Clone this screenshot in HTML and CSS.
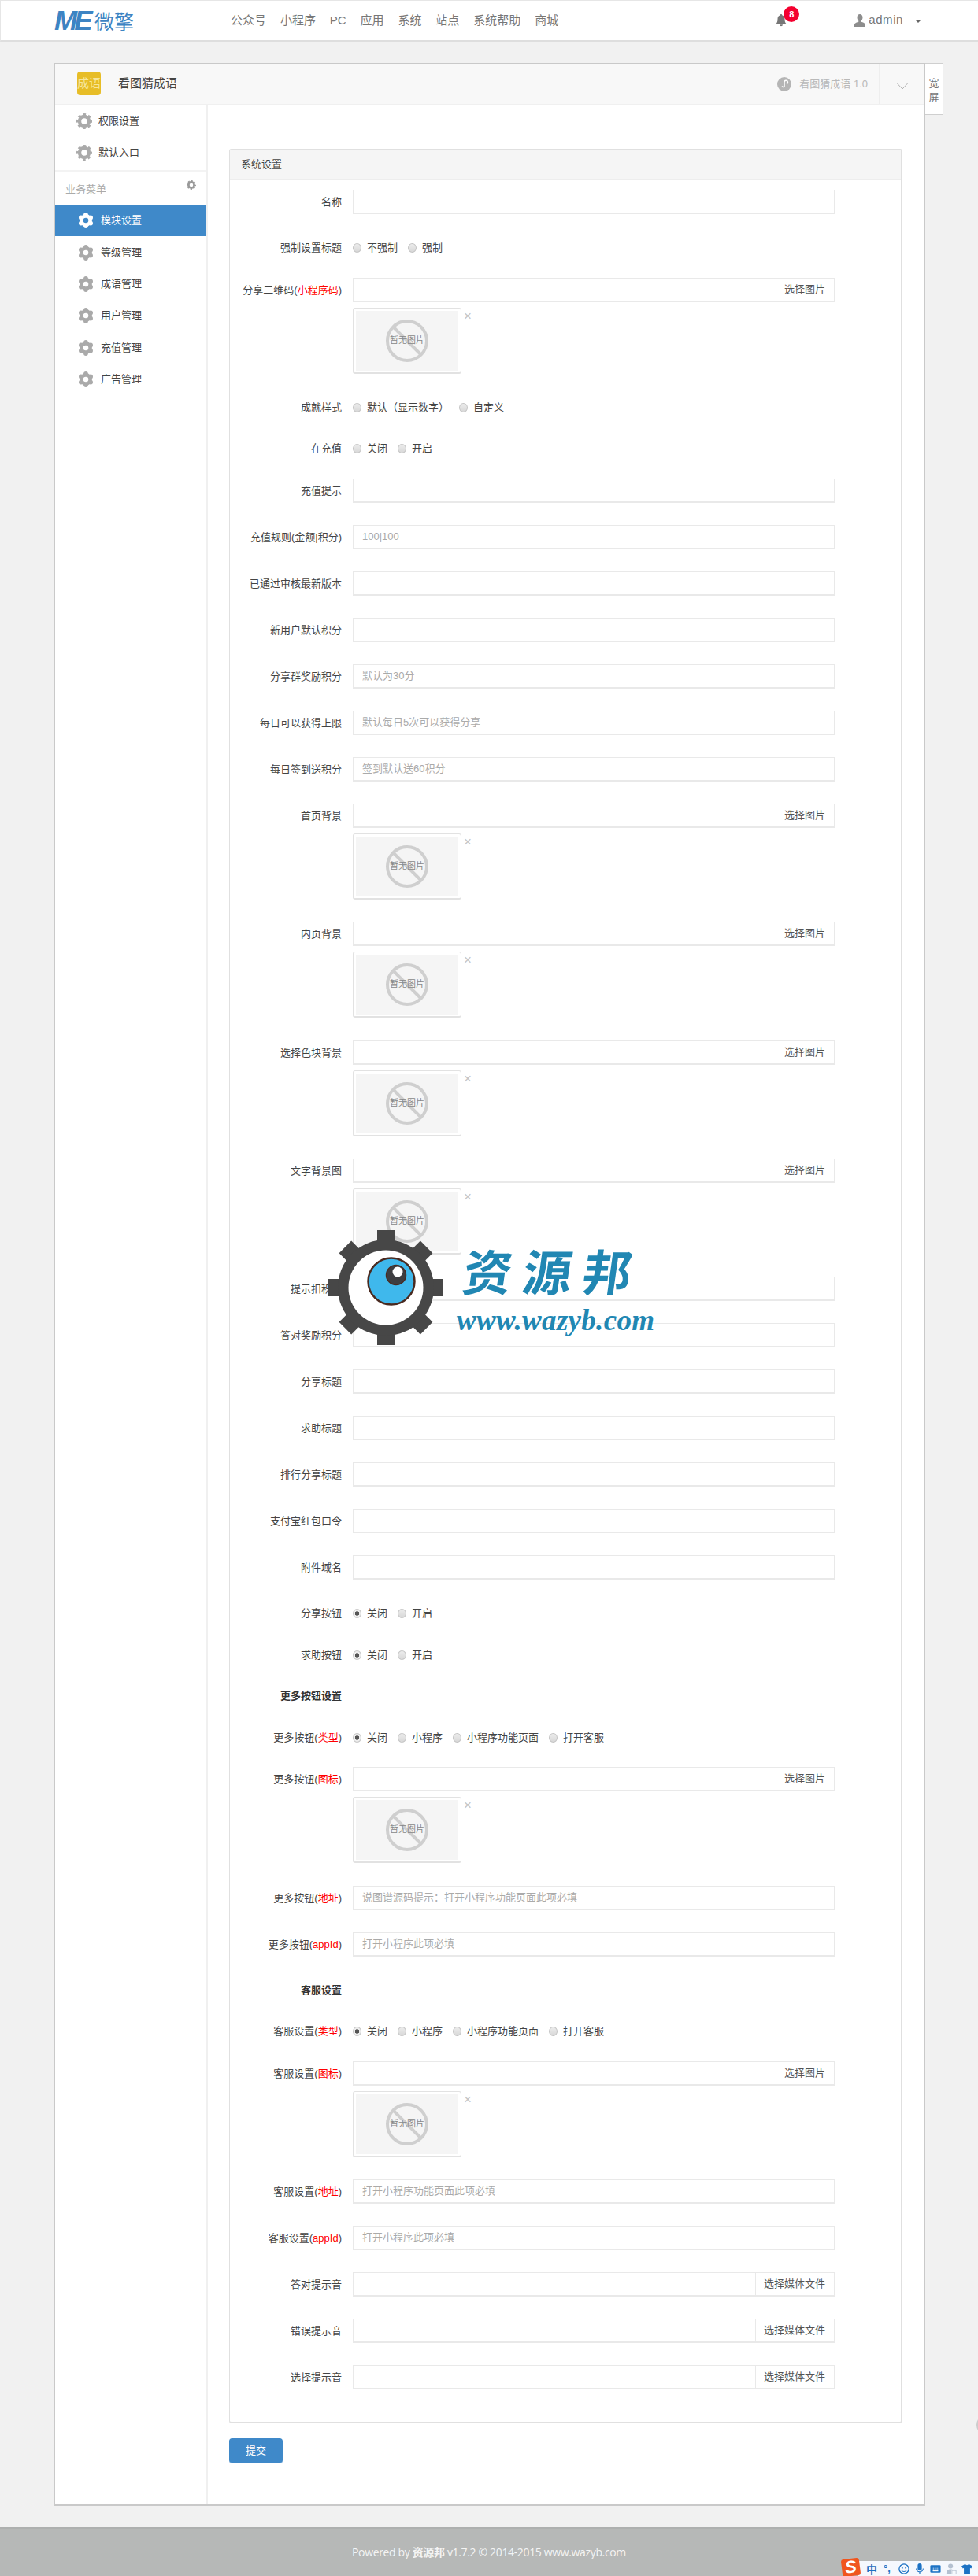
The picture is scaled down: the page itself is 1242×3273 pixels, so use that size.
FILE: index.html
```html
<!DOCTYPE html>
<html lang="zh-CN">
<head>
<meta charset="utf-8">
<title>系统设置</title>
<link rel="stylesheet" href="styles.css">
</head>
<body>
<svg class="defs" width="0" height="0" aria-hidden="true">
  <symbol id="cog" viewBox="0 0 20 20">
    <circle cx="10" cy="10" r="6" fill="none" stroke="currentColor" stroke-width="4.4"/>
    <circle cx="10" cy="10" r="8.4" fill="none" stroke="currentColor" stroke-width="3.2" stroke-dasharray="3.5 3.1" stroke-dashoffset="1.75"/>
  </symbol>
  <symbol id="flower" viewBox="0 0 20 20">
    <circle cx="10" cy="10" r="5.6" fill="none" stroke="currentColor" stroke-width="4.6"/>
    <circle cx="10" cy="2.9" r="2.9" fill="currentColor"/>
    <circle cx="10" cy="17.1" r="2.9" fill="currentColor"/>
    <circle cx="3.9" cy="6.4" r="2.9" fill="currentColor"/>
    <circle cx="16.1" cy="6.4" r="2.9" fill="currentColor"/>
    <circle cx="3.9" cy="13.6" r="2.9" fill="currentColor"/>
    <circle cx="16.1" cy="13.6" r="2.9" fill="currentColor"/>
  </symbol>
  <symbol id="noimg" viewBox="0 0 130 76">
    <rect width="130" height="76" fill="#f5f5f5"/>
    <circle cx="65" cy="38" r="25" fill="none" stroke="#cfcfcf" stroke-width="4"/>
    <path d="M47 20 L83 56" stroke="#cfcfcf" stroke-width="4"/>
  </symbol>
</svg>

<header class="topbar">
  <a class="logo"><span class="logo-mark">ME</span><span class="logo-cn">微擎</span></a>
  <nav class="topnav">
    <a>公众号</a><a>小程序</a><a>PC</a><a>应用</a><a>系统</a><a>站点</a><a>系统帮助</a><a>商城</a>
  </nav>
  <div class="notice">
    <svg class="bell" viewBox="0 0 14 16"><path d="M7 0a1.2 1.2 0 0 1 1.2 1.3C10.6 1.900 11.500 3.800 11.500 6.200c0 3.300.8 4.800 2 6H.5c1.200-1.200 2-2.700 2-6 0-2.400.9-4.300 3.300-4.900A1.200 1.200 0 0 1 7 0zM5 13.200h4a2 2 0 0 1-4 0z" fill="#777"/></svg>
    <span class="badge">8</span>
  </div>
  <div class="account">
    <svg class="user" viewBox="0 0 14 16"><path d="M7 0c2.200 0 3.500 1.700 3.500 4.200 0 1.800-.8 3.400-1.800 4.200v1.300c1.800.7 5.300 1.300 5.300 3.800V16H0v-2.500c0-2.500 3.500-3.100 5.300-3.800V8.400C4.300 7.600 3.500 6 3.500 4.200 3.500 1.700 4.800 0 7 0z" fill="#8d8d8d"/></svg>
    <span class="account-name">admin</span>
    <span class="caret"></span>
  </div>
</header>

<div class="shell">
  <div class="card">
    <div class="card-head">
      <div class="app-icon">成语</div>
      <div class="app-title">看图猜成语</div>
      <div class="app-version">
        <svg class="mini" viewBox="0 0 18 18"><circle cx="9" cy="9" r="9" fill="#b5b5b5"/><path d="M6 11.500a2 2 0 0 0 3 .5V6.500a2.200 2.200 0 1 1 3 2" fill="none" stroke="#fff" stroke-width="1.500"/></svg>
        <span>看图猜成语 1.0</span>
      </div>
      <div class="app-toggle">
        <svg viewBox="0 0 16 10"><path d="M.5 1 L8 9 L15.500 1" fill="none" stroke="#b0b0b0" stroke-width="1"/></svg>
      </div>
    </div>
    <div class="card-body">
      <aside class="side">
        <a class="side-item top"><svg class="ico"><use href="#cog"/></svg>权限设置</a>
        <a class="side-item top"><svg class="ico"><use href="#cog"/></svg>默认入口</a>
        <div class="side-title"><span>业务菜单</span><svg class="ico-small"><use href="#cog"/></svg></div>
        <a class="side-item active"><svg class="ico"><use href="#flower"/></svg>模块设置</a>
        <a class="side-item"><svg class="ico"><use href="#flower"/></svg>等级管理</a>
        <a class="side-item"><svg class="ico"><use href="#flower"/></svg>成语管理</a>
        <a class="side-item"><svg class="ico"><use href="#flower"/></svg>用户管理</a>
        <a class="side-item"><svg class="ico"><use href="#flower"/></svg>充值管理</a>
        <a class="side-item"><svg class="ico"><use href="#flower"/></svg>广告管理</a>
      </aside>
      <main class="content">
        <section class="panel">
          <h2 class="panel-head">系统设置</h2>
          <div class="panel-body">

            <div class="row"><label>名称</label><div class="field"><input></div></div>

            <div class="row pick"><label>强制设置标题</label><div class="radios"><span class="radio"><i></i>不强制</span><span class="radio"><i></i>强制</span></div></div>

            <div class="row"><label>分享二维码(<em>小程序码</em>)</label><div><div class="field"><input><span class="addon">选择图片</span></div><div class="thumb-wrap"><div class="thumb"><svg><use href="#noimg"/></svg><span>暂无图片</span></div><b class="remove">×</b></div></div></div>

            <div class="row pick"><label>成就样式</label><div class="radios"><span class="radio"><i></i>默认（显示数字）</span><span class="radio"><i></i>自定义</span></div></div>

            <div class="row pick"><label>在充值</label><div class="radios"><span class="radio"><i></i>关闭</span><span class="radio"><i></i>开启</span></div></div>

            <div class="row"><label>充值提示</label><div class="field"><input></div></div>
            <div class="row"><label>充值规则(金额|积分)</label><div class="field"><input placeholder="100|100"></div></div>
            <div class="row"><label>已通过审核最新版本</label><div class="field"><input></div></div>
            <div class="row"><label>新用户默认积分</label><div class="field"><input></div></div>
            <div class="row"><label>分享群奖励积分</label><div class="field"><input placeholder="默认为30分"></div></div>
            <div class="row"><label>每日可以获得上限</label><div class="field"><input placeholder="默认每日5次可以获得分享"></div></div>
            <div class="row"><label>每日签到送积分</label><div class="field"><input placeholder="签到默认送60积分"></div></div>

            <div class="row"><label>首页背景</label><div><div class="field"><input><span class="addon">选择图片</span></div><div class="thumb-wrap"><div class="thumb"><svg><use href="#noimg"/></svg><span>暂无图片</span></div><b class="remove">×</b></div></div></div>
            <div class="row"><label>内页背景</label><div><div class="field"><input><span class="addon">选择图片</span></div><div class="thumb-wrap"><div class="thumb"><svg><use href="#noimg"/></svg><span>暂无图片</span></div><b class="remove">×</b></div></div></div>
            <div class="row"><label>选择色块背景</label><div><div class="field"><input><span class="addon">选择图片</span></div><div class="thumb-wrap"><div class="thumb"><svg><use href="#noimg"/></svg><span>暂无图片</span></div><b class="remove">×</b></div></div></div>
            <div class="row"><label>文字背景图</label><div><div class="field"><input><span class="addon">选择图片</span></div><div class="thumb-wrap"><div class="thumb"><svg><use href="#noimg"/></svg><span>暂无图片</span></div><b class="remove">×</b></div></div></div>

            <div class="row"><label>提示扣积分</label><div class="field"><input></div></div>
            <div class="row"><label>答对奖励积分</label><div class="field"><input></div></div>
            <div class="row"><label>分享标题</label><div class="field"><input></div></div>
            <div class="row"><label>求助标题</label><div class="field"><input></div></div>
            <div class="row"><label>排行分享标题</label><div class="field"><input></div></div>
            <div class="row"><label>支付宝红包口令</label><div class="field"><input></div></div>
            <div class="row"><label>附件域名</label><div class="field"><input></div></div>

            <div class="row pick"><label>分享按钮</label><div class="radios"><span class="radio on"><i></i>关闭</span><span class="radio"><i></i>开启</span></div></div>
            <div class="row pick"><label>求助按钮</label><div class="radios"><span class="radio on"><i></i>关闭</span><span class="radio"><i></i>开启</span></div></div>

            <div class="row pick"><label class="strong">更多按钮设置</label><div></div></div>
            <div class="row pick"><label>更多按钮(<em>类型</em>)</label><div class="radios"><span class="radio on"><i></i>关闭</span><span class="radio"><i></i>小程序</span><span class="radio"><i></i>小程序功能页面</span><span class="radio"><i></i>打开客服</span></div></div>
            <div class="row"><label>更多按钮(<em>图标</em>)</label><div><div class="field"><input><span class="addon">选择图片</span></div><div class="thumb-wrap"><div class="thumb"><svg><use href="#noimg"/></svg><span>暂无图片</span></div><b class="remove">×</b></div></div></div>
            <div class="row"><label>更多按钮(<em>地址</em>)</label><div class="field"><input placeholder="说图谱源码提示：打开小程序功能页面此项必填"></div></div>
            <div class="row"><label>更多按钮(<em>appId</em>)</label><div class="field"><input placeholder="打开小程序此项必填"></div></div>

            <div class="row pick"><label class="strong">客服设置</label><div></div></div>
            <div class="row pick"><label>客服设置(<em>类型</em>)</label><div class="radios"><span class="radio on"><i></i>关闭</span><span class="radio"><i></i>小程序</span><span class="radio"><i></i>小程序功能页面</span><span class="radio"><i></i>打开客服</span></div></div>
            <div class="row"><label>客服设置(<em>图标</em>)</label><div><div class="field"><input><span class="addon">选择图片</span></div><div class="thumb-wrap"><div class="thumb"><svg><use href="#noimg"/></svg><span>暂无图片</span></div><b class="remove">×</b></div></div></div>
            <div class="row"><label>客服设置(<em>地址</em>)</label><div class="field"><input placeholder="打开小程序功能页面此项必填"></div></div>
            <div class="row"><label>客服设置(<em>appId</em>)</label><div class="field"><input placeholder="打开小程序此项必填"></div></div>

            <div class="row"><label>答对提示音</label><div class="field"><input><span class="addon">选择媒体文件</span></div></div>
            <div class="row"><label>错误提示音</label><div class="field"><input><span class="addon">选择媒体文件</span></div></div>
            <div class="row"><label>选择提示音</label><div class="field"><input><span class="addon">选择媒体文件</span></div></div>
          </div>
        </section>
        <button class="submit" type="button">提交</button>
      </main>
    </div>
  </div>
  <div class="wide-tab">宽<br>屏</div>
</div>

<footer class="footer">Powered by <b>资源邦</b> v1.7.2 © 2014-2015 www.wazyb.com</footer>

<div class="watermark">
  <svg class="wm-gear" viewBox="0 0 150 150">
    <g fill="#474747">
      <rect x="64" y="2" width="22" height="146"/>
      <rect x="64" y="2" width="22" height="146" transform="rotate(45 75 75)"/>
      <rect x="64" y="2" width="22" height="146" transform="rotate(90 75 75)"/>
      <rect x="64" y="2" width="22" height="146" transform="rotate(135 75 75)"/>
      <circle cx="75" cy="75" r="61"/>
    </g>
    <circle cx="75" cy="75" r="47.500" fill="#fff"/>
    <circle cx="82" cy="67" r="29.500" fill="#3fb8ec" stroke="#4a2a20" stroke-width="2.500"/>
    <circle cx="88" cy="59" r="12.500" fill="#3d3d40" stroke="#4a2a20" stroke-width="1.500"/>
    <circle cx="90" cy="55" r="6.500" fill="#fff"/>
  </svg>
  <div class="wm-text">
    <div class="wm-cn">资源邦</div>
    <div class="wm-en">www.wazyb.com</div>
  </div>
</div>

<div class="edge-dot"></div>

<div class="ime">
  <span class="ime-s">S</span>
  <span class="ime-bar">
    <span class="ime-zh">中</span>
    <span class="ime-punct">°,</span>
    <svg class="ime-i" viewBox="0 0 16 16"><circle cx="8" cy="8" r="7" fill="none" stroke="#1c72c4" stroke-width="1.500"/><circle cx="5.500" cy="6.500" r="1.100" fill="#1c72c4"/><circle cx="10.500" cy="6.500" r="1.100" fill="#1c72c4"/><path d="M4.500 10a4 4 0 0 0 7 0" fill="none" stroke="#1c72c4" stroke-width="1.300"/></svg>
    <svg class="ime-i" viewBox="0 0 16 16"><rect x="5" y="0" width="6" height="10.500" rx="3" fill="#1c72c4"/><path d="M3 7.500a5 5 0 0 0 10 0M8 12.500V15M5 15.500h6" fill="none" stroke="#1c72c4" stroke-width="1.300"/></svg>
    <svg class="ime-i" viewBox="0 0 16 16"><rect x=".5" y="2.500" width="15" height="11" rx="1.500" fill="#1c72c4"/><path d="M2.500 5.500h11M2.500 8h11" stroke="#fff" stroke-width="1.200" stroke-dasharray="1.200 .8"/><path d="M4 11h8" stroke="#fff" stroke-width="1.300"/></svg>
    <svg class="ime-i" viewBox="0 0 16 16"><circle cx="7" cy="4" r="3.500" fill="#b4c0d0"/><path d="M1 15c0-5 2.500-6.500 6-6.500 2 0 3 .5 4 1.500H8v5z" fill="#b4c0d0"/><rect x="9" y="10.500" width="6" height="5" fill="none" stroke="#b4c0d0"/></svg>
    <svg class="ime-i" viewBox="0 0 16 16"><path d="M5 1 8 2.500 11 1l5 3-2 3.500-1.500-.8V15h-9V6.700L2 7.500 0 4z" fill="#1c72c4"/></svg>
  </span>
</div>
</body>
</html>
```

FILE: styles.css
```css
* { box-sizing: border-box; }
html, body { margin: 0; padding: 0; }
body {
  position: relative;
  width: 1242px;
  height: 3273px;
  overflow: hidden;
  background: #f1f1f1;
  color: #444;
  font: 13px/20px "Liberation Sans", "Noto Sans CJK SC", sans-serif;
}
.defs { position: absolute; }

/* top bar */
.topbar {
  display: flex;
  align-items: center;
  height: 53px;
  padding: 0 0 0 69px;
  background: #fff;
  border-top: 1px solid #e6e6e6;
  border-left: 1px solid #e6e6e6;
  border-bottom: 2px solid #dedede;
}
.logo { display: flex; align-items: center; width: 224px; margin-left: -1px; color: #3d84c3; }
.logo-mark { font: italic 700 35px/36px "Liberation Sans", sans-serif; letter-spacing: -4px; width: 51px; }
.logo-cn { font: 400 25px/36px "Noto Sans CJK SC", sans-serif; letter-spacing: 0; }
.topnav { display: flex; gap: 17.900px; font-size: 15px; color: #777; }
.notice { position: relative; width: 20px; height: 18px; margin-left: 276px; }
.bell { display: block; width: 14px; height: 16px; margin-top: 1px; }
.badge {
  position: absolute;
  left: 10px;
  top: -9px;
  width: 20px;
  height: 20px;
  border-radius: 50%;
  background: #f4002f;
  color: #fff;
  font: 700 11px/20px "Liberation Sans", sans-serif;
  text-align: center;
}
.account { display: flex; align-items: center; margin-left: 80px; color: #777; }
.user { width: 14px; height: 16px; }
.account-name { margin-left: 4px; font: 15px/20px "Liberation Sans", sans-serif; letter-spacing: .6px; margin-top: -3px; }
.caret { width: 0; height: 0; margin: 2px 0 0 16px; border: 3.500px solid transparent; border-top-color: #666; border-bottom-width: 0; }

/* shell */
.shell { display: flex; align-items: flex-start; margin: 27px 0 27px 69px; }
.card { width: 1106px; height: 3104px; background: #fff; border: 1px solid #c9c9c9; border-width: 1px 1px 2px 1px; display: flex; flex-direction: column; }
.wide-tab {
  width: 23px;
  height: 66px;
  padding-top: 16px;
  background: #fff;
  border: 1px solid #cfcfcf;
  border-left: 0;
  color: #777;
  font-size: 13px;
  line-height: 18px;
  text-align: center;
}
.card-head {
  display: flex;
  align-items: center;
  flex: none;
  height: 53px;
  padding-left: 28px;
  background: #f8f8f8;
  border-bottom: 2px solid #f0f0f0;
}
.app-icon {
  width: 30px;
  height: 30px;
  margin-top: -1px;
  border-radius: 4px;
  background: #e7bd27;
  color: #f6e59b;
  font-size: 15px;
  line-height: 30px;
  text-align: center;
  letter-spacing: 0;
  white-space: nowrap;
}
.app-title { margin-left: 22px; margin-top: -2px; font-size: 15px; color: #444; }
.app-version { display: flex; align-items: center; margin-left: auto; color: #b9b9b9; font-size: 13px; }
.mini { width: 18px; height: 18px; margin-right: 10px; }
.app-toggle {
  display: flex;
  align-items: center;
  justify-content: center;
  width: 58px;
  height: 51px;
  margin-left: 14px;
  border-left: 1px solid #eee;
}
.app-toggle svg { width: 16px; height: 10px; margin-top: 4px; }
.card-body { display: flex; flex: 1; }

/* sidebar */
.side { flex: none; width: 194px; border-right: 2px solid #f0f0f0; color: #444; }
.side-item { display: flex; align-items: center; height: 40.400px; padding-left: 29px; color: #444; }
.side-item.top { height: 40px; padding-left: 27px; }
.side-item .ico { color: #aaa; }
.side-item.active { background: #3f89c9; color: #fff; }
.side-item.active .ico { color: #fff; }
.ico { width: 20px; height: 20px; margin-right: 9px; flex: none; }
.side-item.top .ico { margin-right: 8px; }
.side-title {
  display: flex;
  justify-content: space-between;
  height: 44px;
  margin-top: 2px;
  padding: 12px 13px 0 13px;
  border-top: 3px solid #f3f3f3;
  color: #aaa;
}
.ico-small { width: 12px; height: 12px; margin-top: -2px; color: #999; }

/* content */
.content { flex: 1; padding: 55px 28px 0 27px; }
.panel { border: 1px solid #e0e0e0; border-width: 1px 2px 2px 1px; border-radius: 3px; }
.panel-head {
  margin: 0;
  height: 39px;
  padding-left: 14px;
  background: #f5f5f5;
  border-bottom: 2px solid #ededed;
  color: #444;
  font-size: 13px;
  font-weight: 400;
  line-height: 37px;
}
.panel-body { padding: 12px 0 13px; }
.row { display: grid; grid-template-columns: 142px 612px; column-gap: 14px; margin-bottom: 28px; }
.row > label { line-height: 31px; text-align: right; color: #444; white-space: nowrap; }
.row.pick { height: 25px; margin-bottom: 27.500px; }
.row.pick > label { padding-top: 5px; line-height: 20px; }
.row label.strong { font-weight: 700; color: #333; }
em { font-style: normal; color: #f00; }

.field { display: flex; height: 31px; background: #fff; border: 1px solid #e9e9e9; border-bottom-width: 2px; }
.field input {
  flex: 1;
  min-width: 0;
  padding: 0 11px;
  border: 0;
  outline: 0;
  background: transparent;
  font: inherit;
}
.field input::placeholder { color: #aaa; opacity: 1; }
.addon { flex: none; padding: 0 11px 0 10px; border-left: 1px solid #e9e9e9; color: #555; line-height: 28px; }

.thumb-wrap { display: flex; align-items: flex-start; margin-top: 7px; height: 84.400px; }
.thumb {
  position: relative;
  width: 138px;
  height: 84px;
  padding: 3px;
  background: #fff;
  border: 1px solid #e2e2e2;
  border-bottom-width: 2px;
  border-radius: 3px;
}
.thumb svg { display: block; width: 130px; height: 76px; }
.thumb span {
  position: absolute;
  left: 0;
  right: 0;
  top: 31px;
  color: #888;
  font-size: 11px;
  line-height: 18px;
  text-align: center;
}
.remove { margin: 1px 0 0 3px; color: #c4c4c4; font-size: 17px; font-weight: 400; line-height: 20px; }

.radios { display: flex; padding-top: 5px; }
.radio { display: flex; align-items: center; margin-right: 13px; color: #444; white-space: nowrap; }
.radio i {
  width: 11px;
  height: 12px;
  margin-right: 7px;
  border: 1px solid #c4c4c4;
  border-radius: 50%;
  background: linear-gradient(#ececec, #d8d8d8);
}
.radio.on i { background: radial-gradient(circle, #555 0 2.500px, #eee 3px); }

.submit {
  display: block;
  width: 68px;
  height: 32px;
  margin-top: 19px;
  padding: 0;
  border: 0;
  border-bottom: 1px solid #8ab4dc;
  border-radius: 4px;
  background: #3f89c9;
  color: #fff;
  font: inherit;
}

.footer {
  height: 62px;
  background: #b6b8b7;
  border-top: 2px solid #aeb0af;
  color: #f4f4f4;
  font: 14px/60px "Open Sans", "Noto Sans CJK SC", sans-serif;
  letter-spacing: -.35px;
  text-align: center;
}
.footer b { font-weight: 700; }

/* overlays */
.watermark { position: absolute; left: 415px; top: 1561px; display: flex; }
.wm-gear { width: 150px; height: 150px; flex: none; }
.wm-text { margin-left: 24px; color: #2187b3; }
.wm-cn {
  margin-top: 14px;
  font: 700 62px/76px "Noto Sans CJK SC", sans-serif;
  letter-spacing: 14px;
  white-space: nowrap;
  transform: skewX(-8deg);
}
.wm-en { margin-top: 7px; margin-left: -9px; font: italic 700 37px/40px "Liberation Serif", serif; letter-spacing: .3px; white-space: nowrap; }

.edge-dot {
  position: absolute;
  left: 1240px;
  top: 3068px;
  width: 26px;
  height: 26px;
  border-radius: 50%;
  border: 2px solid #ccc;
}

.ime { position: absolute; right: 0; bottom: 0; display: flex; align-items: flex-end; }
.ime-s {
  position: relative;
  z-index: 1;
  width: 23px;
  height: 22px;
  margin-right: -2px;
  border-radius: 3px;
  background: #f0551e;
  color: #fff;
  font: italic 700 22px/22px "Liberation Sans", sans-serif;
  text-align: center;
  transform: rotate(-7deg);
}
.ime-bar { display: flex; align-items: center; gap: 6px; width: 152px; height: 19px; padding-left: 10px; background: #f5f8fd; color: #1c72c4; }
.ime-zh { font: 700 14px/16px "Noto Sans CJK SC", sans-serif; }
.ime-punct { width: 13px; margin-left: 2px; font: 700 13px/14px "Liberation Sans", sans-serif; }
.ime-i { width: 14px; height: 14px; }
```
